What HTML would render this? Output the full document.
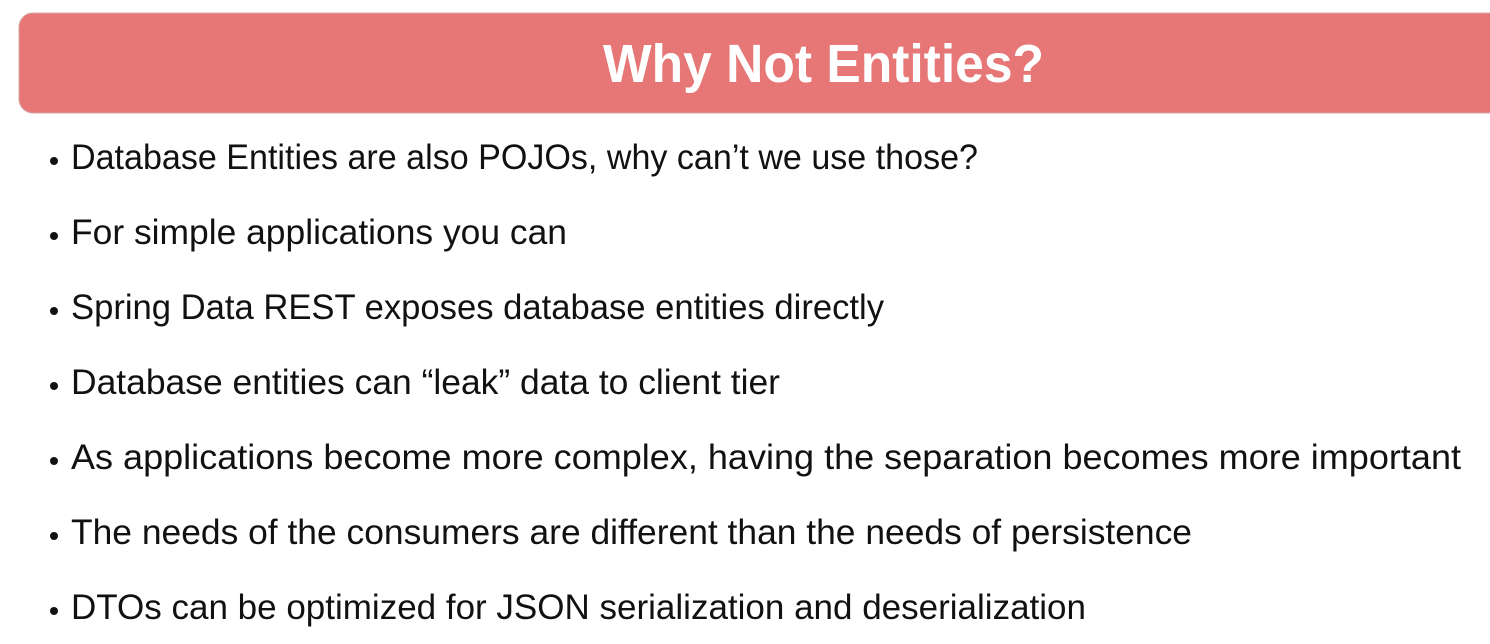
<!DOCTYPE html>
<html><head><meta charset="utf-8"><style>
html,body{margin:0;padding:0;background:#fff;width:1490px;height:644px;overflow:hidden}
svg{display:block}
</style></head><body>
<svg width="1490" height="644" viewBox="0 0 1490 644" xmlns="http://www.w3.org/2000/svg">
<rect x="0" y="0" width="1490" height="644" fill="#ffffff"/>
<rect x="19" y="13" width="1500" height="100" rx="14" fill="#e67776" stroke="#d9a5a4" stroke-width="1"/>
<text x="603" y="82" font-family="Liberation Sans, sans-serif" font-weight="bold" font-size="54" fill="#ffffff" textLength="441" lengthAdjust="spacingAndGlyphs">Why Not Entities?</text>
<g font-family="Liberation Sans, sans-serif" font-size="35" fill="#111">
<circle cx="54" cy="161" r="4" fill="#111"/>
<text x="71" y="169" textLength="907" lengthAdjust="spacingAndGlyphs">Database Entities are also POJOs, why can’t we use those?</text>
<circle cx="54" cy="236" r="4" fill="#111"/>
<text x="71" y="244" textLength="496" lengthAdjust="spacingAndGlyphs">For simple applications you can</text>
<circle cx="54" cy="311" r="4" fill="#111"/>
<text x="71" y="319" textLength="813" lengthAdjust="spacingAndGlyphs">Spring Data REST exposes database entities directly</text>
<circle cx="54" cy="386" r="4" fill="#111"/>
<text x="71" y="394" textLength="709" lengthAdjust="spacingAndGlyphs">Database entities can “leak” data to client tier</text>
<circle cx="54" cy="461" r="4" fill="#111"/>
<text x="71" y="469" textLength="1390" lengthAdjust="spacingAndGlyphs">As applications become more complex, having the separation becomes more important</text>
<circle cx="54" cy="536" r="4" fill="#111"/>
<text x="71" y="544" textLength="1121" lengthAdjust="spacingAndGlyphs">The needs of the consumers are different than the needs of persistence</text>
<circle cx="54" cy="611" r="4" fill="#111"/>
<text x="71" y="619" textLength="1015" lengthAdjust="spacingAndGlyphs">DTOs can be optimized for JSON serialization and deserialization</text>
</g>
</svg>
</body></html>
